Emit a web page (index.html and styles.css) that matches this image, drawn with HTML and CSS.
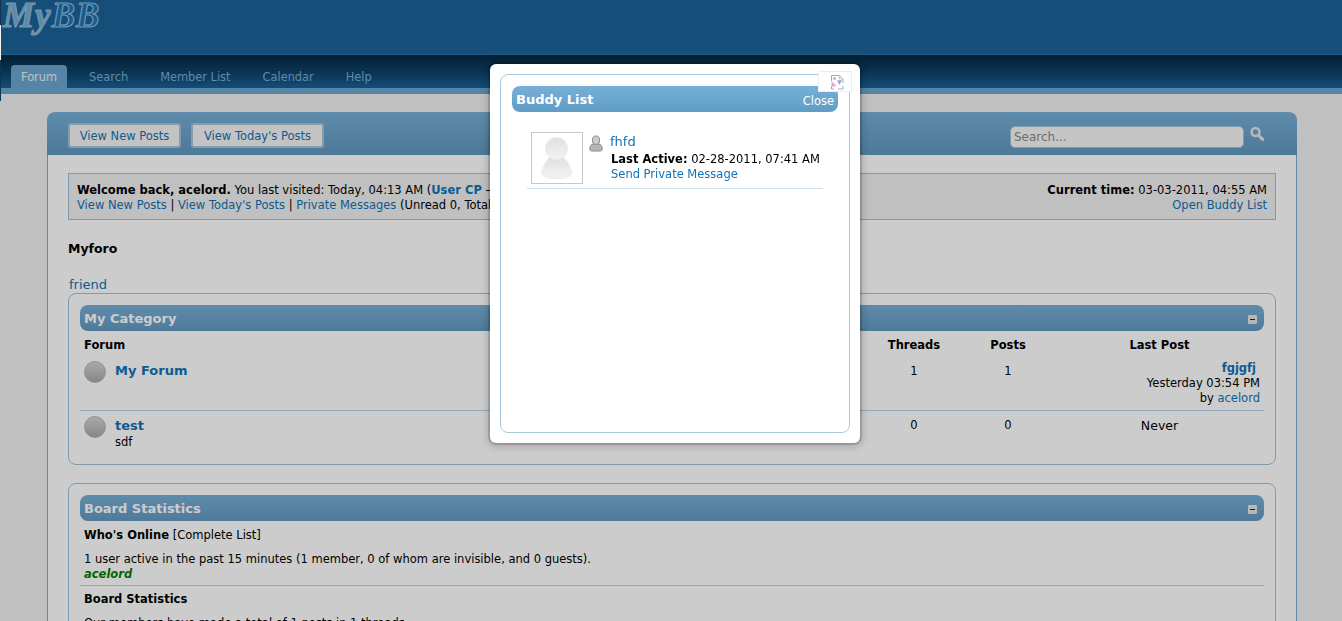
FILE: index.html
```html
<!DOCTYPE html>
<html lang="en">
<head>
    <meta charset="UTF-8">
    <title>Myforo - Forum</title>
    <link rel="stylesheet" href="styles.css">
</head>
<body>
    <div class="page">
        <div class="logo-bar">
            <div class="logo"><span class="logo-my">My</span><span class="logo-bb">BB</span></div>
        </div>
        <div class="menu">
            <a class="tab active" href="#">Forum</a>
            <a class="tab" href="#">Search</a>
            <a class="tab" href="#">Member List</a>
            <a class="tab" href="#">Calendar</a>
            <a class="tab" href="#">Help</a>
        </div>
        <div class="menu-strip"></div>

        <div class="wrapper">
            <div class="toolbar">
                <a class="btn btn-first" href="#">View New Posts</a>
                <a class="btn btn-second" href="#">View Today's Posts</a>
                <input class="search-input" type="text" placeholder="Search...">
                <svg class="search-icon" width="16" height="16" viewBox="0 0 16 16">
                    <circle cx="6.5" cy="6" r="4" fill="none" stroke="#e4e8ea" stroke-width="2.4"/>
                    <path d="M9.5 9.2 L13.6 13.4" stroke="#e4e8ea" stroke-width="3" stroke-linecap="round"/>
                </svg>
            </div>

            <div class="content">
                <div class="welcome">
                    <div>
                        <strong>Welcome back, acelord.</strong> You last visited: Today, 04:13 AM (<a href="#"><strong>User CP</strong></a> &mdash; <a href="#"><strong>Log Out</strong></a>)<br>
                        <a href="#">View New Posts</a> | <a href="#">View Today's Posts</a> | <a href="#">Private Messages</a> (Unread 0, Total 0)
                    </div>
                    <div class="welcome-right">
                        <strong>Current time:</strong> 03-03-2011, 04:55 AM<br>
                        <a href="#">Open Buddy List</a>
                    </div>
                </div>

                <div class="board-title">Myforo</div>
                <a class="friend" href="#">friend</a>

                <div class="box box-forums">
                    <div class="thead">
                        <span>My Category</span>
                        <span class="collapse"></span>
                    </div>
                    <div class="forum-row forum-head">
                        <div class="col-forum">Forum</div>
                        <div class="col-num">Threads</div>
                        <div class="col-num">Posts</div>
                        <div class="col-num">Last Post</div>
                    </div>
                    <div class="forum-row row-one">
                        <div class="col-forum">
                            <span class="status-dot"></span>
                            <div><a class="forum-name" href="#">My Forum</a></div>
                        </div>
                        <div class="col-num">1</div>
                        <div class="col-num">1</div>
                        <div class="col-last">
                            <a class="last-title" href="#">fgjgfj</a><br>
                            Yesterday 03:54 PM<br>
                            by <a href="#">acelord</a>
                        </div>
                    </div>
                    <div class="forum-row row-two">
                        <div class="col-forum">
                            <span class="status-dot"></span>
                            <div><a class="forum-name" href="#">test</a><div class="forum-desc">sdf</div></div>
                        </div>
                        <div class="col-num">0</div>
                        <div class="col-num">0</div>
                        <div class="col-num never">Never</div>
                    </div>
                </div>

                <div class="box box-stats">
                    <div class="thead">
                        <span>Board Statistics</span>
                        <span class="collapse"></span>
                    </div>
                    <div class="stats-block">
                        <div class="stats-title"><strong>Who's Online</strong> [<a class="plain" href="#">Complete List</a>]</div>
                        <div>1 user active in the past 15 minutes (1 member, 0 of whom are invisible, and 0 guests).</div>
                        <a class="online-user" href="#">acelord</a>
                    </div>
                    <div class="stats-block stats-second">
                        <div class="stats-title"><strong>Board Statistics</strong></div>
                        <div>Our members have made a total of 1 posts in 1 threads.</div>
                    </div>
                </div>
            </div>
        </div>
    </div>

    <div class="overlay"></div>
    <div class="edge"></div>

    <div class="modal">
        <div class="modal-inner">
            <div class="modal-head">
                <span>Buddy List</span>
                <a class="modal-close" href="#">Close</a>
            </div>
            <div class="buddy">
                <div class="avatar">
                    <svg width="50" height="50" viewBox="0 0 50 50">
                        <defs>
                            <linearGradient id="av" x1="0" y1="0" x2="0" y2="1">
                                <stop offset="0" stop-color="#e0e0e0"/>
                                <stop offset="1" stop-color="#f3f3f3"/>
                            </linearGradient>
                        </defs>
                        <path d="M14 44 C10 43 9 41 10 38 C12 31 15 27 18 24 L31 24 C34 27 38 31 39 38 C40 41 39 43 35 44 C28 46 21 46 14 44 Z" fill="url(#av)" stroke="#ececec"/>
                        <circle cx="24.5" cy="15.5" r="11" fill="url(#av)" stroke="#ececec"/>
                    </svg>
                </div>
                <svg class="status-icon" width="14" height="17" viewBox="0 0 14 17">
                    <path d="M2.5 16 C1 16 0.7 15 0.8 13 C1 11 2 9.5 4 9 L10 9 C12 9.5 13 11 13.2 13 C13.3 15 13 16 11.5 16 Z" fill="#b6b6b6" stroke="#8a8a8a"/>
                    <ellipse cx="7" cy="5.2" rx="3.6" ry="4.2" fill="#cdcdcd" stroke="#8a8a8a"/>
                </svg>
                <div class="buddy-info">
                    <a class="buddy-name" href="#">fhfd</a>
                    <div class="buddy-active"><strong>Last Active:</strong> 02-28-2011, 07:41 AM</div>
                    <a href="#">Send Private Message</a>
                </div>
            </div>
        </div>
        <div class="broken-img">
            <svg width="16" height="16" viewBox="0 0 16 16">
                <path d="M2.5 7 V1.5 H10.5 L14 5 V9 M14 12 V15 H9 M5 15 H2.5 V12" fill="none" stroke="#a8a8a8"/>
                <path d="M10.5 1.5 V5 H14" fill="none" stroke="#c2c2c2"/>
                <circle cx="5.5" cy="4.5" r="1.6" fill="#a9c9a0"/>
                <path d="M2.5 7 L7.5 12 L2.5 13 Z" fill="#eaa6d8"/>
                <path d="M8 6.5 L13 6 L10.5 11 Z" fill="#9f9fd8"/>
            </svg>
        </div>
    </div>
</body>
</html>
```

FILE: styles.css
```css
* {
    margin: 0;
    padding: 0;
    box-sizing: border-box;
}

html, body {
    height: 621px;
    overflow: hidden;
}

body {
    background-color: #f0f0f0;
    color: #000;
    font-family: 'DejaVu Sans', Verdana, sans-serif;
    font-size: 11.5px;
    line-height: 15px;
}

a {
    color: #0f72b5;
    text-decoration: none;
}

.page {
    height: 621px;
    overflow: hidden;
}

/* header */
.logo-bar {
    height: 55px;
    padding-left: 3px;
    background-color: #1a6197;
    border-bottom: 1px solid #2b71a5;
}

.logo {
    font-family: 'Liberation Serif', serif;
    font-style: italic;
    font-weight: bold;
    font-size: 35px;
    line-height: 31px;
    letter-spacing: 1px;
    -webkit-text-stroke: 1.2px #8fbcda;
}

.logo-my {
    color: #7aabd0;
}

.logo-bb {
    color: #1c72b4;
}

.menu {
    display: flex;
    align-items: flex-end;
    height: 33px;
    padding-left: 11px;
    background: linear-gradient(to bottom, #04263f, #0c3f66 50%, #196097);
}

.tab {
    display: block;
    height: 23px;
    padding: 5px 10px 0;
    margin-right: 12px;
    color: #74aed4;
    font-size: 11.4px;
}

.tab.active {
    width: 56px;
    color: #e8f4ff;
    background-color: #6ba5d0;
    border-radius: 4px 4px 0 0;
}

.menu-strip {
    height: 6px;
    background-color: #6ba5d0;
}

/* main column */
.wrapper {
    margin: 18px 45px 0 47px;
}

.toolbar {
    display: flex;
    align-items: center;
    height: 43px;
    padding: 4px 32px 0 21px;
    background: linear-gradient(to bottom, #77aed6, #6097bf);
    border-radius: 8px 8px 0 0;
}

.btn {
    display: block;
    height: 25px;
    margin-right: 10px;
    padding-top: 4px;
    text-align: center;
    background-color: #f4f4f4;
    border: 2px solid #a3c5dc;
    border-radius: 3px;
}

.btn-first {
    width: 113px;
}

.btn-second {
    width: 133px;
}

.search-input {
    width: 234px;
    height: 22px;
    margin-left: auto;
    margin-top: 3px;
    padding: 0 3px;
    background-color: #f6f6f6;
    border: 1px solid #a3c5dc;
    border-radius: 5px;
    font-family: 'DejaVu Sans', Verdana, sans-serif;
    font-size: 12px;
}

.search-input::placeholder {
    color: #8a8a8a;
}

.search-icon {
    margin-left: 5px;
    margin-top: -4px;
}

.content {
    padding: 18px 20px 0;
    background-color: #fff;
    border-left: 1px solid #77aed6;
    border-right: 1px solid #77aed6;
    height: 500px;
}

.welcome {
    display: flex;
    justify-content: space-between;
    height: 47px;
    padding: 9px 8px 0;
    background-color: #f0f0f0;
    border: 1px solid #9cc3dd;
}

.welcome-right {
    text-align: right;
}

.board-title {
    margin-top: 21px;
    font-weight: bold;
    font-size: 12.5px;
}

.friend {
    display: block;
    margin-top: 21px;
    padding-left: 1px;
    font-size: 13px;
    line-height: 15px;
}

.box {
    padding: 0 11px;
    border: 1px solid #9cc3dd;
    border-radius: 8px;
}

.box-forums {
    height: 172px;
    padding-top: 11px;
    margin-top: 1px;
}

.box-stats {
    height: 200px;
    padding-top: 11px;
    margin-top: 18px;
}

.thead {
    display: flex;
    justify-content: space-between;
    align-items: center;
    height: 26px;
    padding: 0 7px 0 4px;
    color: #fff;
    font-weight: bold;
    font-size: 13px;
    background: linear-gradient(to bottom, #77aed6, #6398c0);
    border-radius: 8px;
}

.collapse {
    position: relative;
    width: 9px;
    height: 9px;
    margin-top: 2px;
    background-color: #e6e6e6;
    border-radius: 1px;
}

.collapse::after {
    content: "";
    position: absolute;
    left: 2px;
    top: 4px;
    width: 5px;
    height: 1px;
    background-color: #222;
}

.forum-row {
    display: grid;
    grid-template-columns: 1fr 94px 94px 209px;
}

.forum-head {
    height: 22px;
    padding-top: 7px;
    padding-left: 4px;
    font-weight: bold;
}

.col-num {
    text-align: center;
}

.forum-head .col-forum {
    display: block;
}

.col-forum {
    display: flex;
    column-gap: 9px;
}

.row-one {
    height: 58px;
    padding: 8px 0 0 4px;
    border-bottom: 1px solid #b5d4ea;
}

.row-one .col-num {
    padding-top: 3px;
}

.row-two {
    padding: 5px 0 0 4px;
}

.row-two .col-num {
    padding-top: 2px;
}

.status-dot {
    flex: none;
    width: 22px;
    height: 22px;
    background: linear-gradient(to bottom, #d4d4d4, #a8a8a8);
    border: 1px solid #b8b8b8;
    border-radius: 50%;
}

.forum-name {
    font-weight: bold;
    font-size: 13px;
    line-height: 19px;
}

.forum-desc {
    line-height: 14px;
}

.col-last {
    padding-right: 4px;
    text-align: right;
}

.last-title {
    font-weight: bold;
    margin-right: 4px;
}

.never {
    font-size: 12.5px;
}

.stats-block {
    padding: 7px 4px 3px;
}

.stats-title {
    margin-bottom: 9px;
}

.stats-second {
    padding-top: 6px;
    border-top: 1px solid #b5d4ea;
}

.plain {
    color: #000;
}

.online-user {
    display: block;
    color: #008000;
    font-weight: bold;
    font-style: italic;
}

/* popup */
.overlay {
    position: fixed;
    top: 0;
    left: 0;
    right: 0;
    bottom: 0;
    background-color: #ccc;
    mix-blend-mode: multiply;
}

.edge {
    position: fixed;
    top: 0;
    left: 0;
    width: 1px;
    height: 101px;
    background: linear-gradient(to bottom, #0c3554 25px, #f4f4f4 25px, #f4f4f4 60px, #0c3554 60px);
}

.modal {
    position: absolute;
    left: 490px;
    top: 64px;
    width: 370px;
    height: 379px;
    padding: 10px;
    background-color: #fff;
    border-radius: 6px;
    box-shadow: 0 0 0 2px rgba(0, 0, 0, 0.15), 0 1px 9px 2px rgba(0, 0, 0, 0.2);
}

.modal-inner {
    height: 359px;
    padding: 11px;
    border: 1px solid #a9cbe0;
    border-radius: 8px;
}

.modal-head {
    display: flex;
    justify-content: space-between;
    height: 26px;
    padding: 6px 4px 0 4px;
    color: #fff;
    font-weight: bold;
    font-size: 13px;
    background: linear-gradient(to bottom, #77b0d7, #5f9cc6);
    border-radius: 8px;
}

.modal-close {
    margin-top: 2px;
    color: #fff;
    font-weight: normal;
    font-size: 11.5px;
}

.buddy {
    display: flex;
    width: 296px;
    height: 57px;
    margin: 20px 0 0 15px;
    padding-left: 4px;
    border-bottom: 1px solid #cfe3ef;
}

.avatar {
    flex: none;
    width: 52px;
    height: 52px;
    border: 1px solid #c8c8c8;
}

.status-icon {
    flex: none;
    margin: 3px 0 0 6px;
}

.buddy-info {
    margin-left: 7px;
    padding-left: 1px;
}

.buddy-name {
    display: block;
    margin-left: -1px;
    padding-top: 2px;
    font-size: 13px;
    line-height: 15px;
}

.buddy-active {
    margin-top: 3px;
    line-height: 15px;
}

.broken-img {
    position: absolute;
    top: 7px;
    right: 8px;
    width: 34px;
    height: 21px;
    padding: 2px 0 0 10px;
    background-color: #fff;
    border: 1px solid #eee;
}
```
